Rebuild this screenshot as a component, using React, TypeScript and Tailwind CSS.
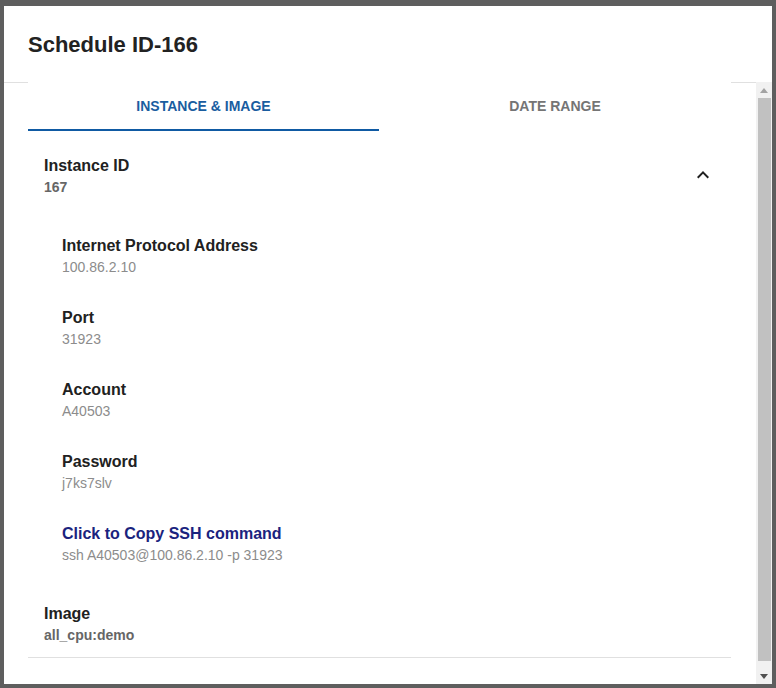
import React from 'react';

const details = [
  { label: 'Internet Protocol Address', value: '100.86.2.10' },
  { label: 'Port', value: '31923' },
  { label: 'Account', value: 'A40503' },
  { label: 'Password', value: 'j7ks7slv' },
];

function ChevronUp() {
  return (
    <svg width="24" height="24" viewBox="0 0 24 24" className="block">
      <path d="M7.41 15.41 12 10.83l4.59 4.58L18 14l-6-6-6 6z" fill="#1f1f1f" />
    </svg>
  );
}

function Scrollbar() {
  return (
    <div className="flex w-[16px] shrink-0 flex-col bg-[#f1f1f1]">
      {/* up arrow */}
      <div className="flex h-[16px] items-center justify-center">
        <svg width="8" height="5" viewBox="0 0 8 5">
          <path d="M0 5 4 0l4 5z" fill="#a3a3a3" />
        </svg>
      </div>
      <div className="flex-1 px-[1px] pb-[7px]">
        <div className="mx-auto h-full w-[13px] bg-[#c1c1c1]" />
      </div>
      {/* down arrow */}
      <div className="flex h-[16px] items-center justify-center">
        <svg width="8" height="5" viewBox="0 0 8 5">
          <path d="M0 0h8L4 5z" fill="#505050" />
        </svg>
      </div>
    </div>
  );
}

export default function App() {
  return (
    <div
      className="h-[688px] w-[776px] overflow-hidden bg-[#5e5e5e] pl-[4px] pt-[6px]"
      style={{ fontFamily: '"Liberation Sans", Arial, sans-serif' }}
    >
      <div className="flex h-[678px] w-[768px] flex-col bg-white">
        {/* Header */}
        <div className="flex h-[76px] shrink-0 items-center pl-[24px] pt-[2px]">
          <h2 className="text-[22px] font-bold leading-none text-[#222222]">Schedule ID-166</h2>
        </div>

        {/* Body */}
        <div className="flex min-h-0 flex-1">
          <div className="flex-1 border-t border-[#e0e0e0] pl-[24px] pr-[25px]">
            <div className="relative -mt-px bg-white pt-px">
              {/* Tabs */}
              <div className="flex h-[48px]">
                <div className="flex w-[351px] flex-col">
                  <div className="flex flex-1 items-center justify-center text-[14px] font-bold text-[#1a5d9f]">
                    INSTANCE &amp; IMAGE
                  </div>
                  <div className="h-[2px] bg-[#0f5aa3]" />
                </div>
                <div className="flex flex-1 items-center justify-center pb-[2px] text-[14px] font-bold text-[#757575]">
                  DATE RANGE
                </div>
              </div>

              {/* Instance accordion */}
              <div className="flex items-start pl-[16px] pr-[16px] pt-[25px]">
                <div className="flex-1">
                  <div className="text-[16px] font-bold leading-[20px] text-[#212121]">Instance ID</div>
                  <div className="mt-[3px] text-[14px] font-bold leading-[16px] text-[#666666]">167</div>
                </div>
                <div className="mt-[7px]">
                  <ChevronUp />
                </div>
              </div>

              <div className="pl-[34px] pt-[41px]">
                {details.map((d) => (
                  <div key={d.label} className="mb-[32px]">
                    <div className="text-[16px] font-bold leading-[20px] text-[#212121]">{d.label}</div>
                    <div className="mt-[2px] text-[14px] leading-[18px] text-[#8c8c8c]">{d.value}</div>
                  </div>
                ))}
                <div>
                  <div className="cursor-pointer text-[16px] font-bold leading-[20px] text-[#1a237e]">
                    Click to Copy SSH command
                  </div>
                  <div className="mt-[2px] text-[14px] leading-[18px] text-[#8c8c8c]">
                    ssh A40503@100.86.2.10 -p 31923
                  </div>
                </div>
              </div>

              {/* Image */}
              <div className="border-b border-[#e0e0e0] pb-[14px] pl-[16px] pt-[40px]">
                <div className="text-[16px] font-bold leading-[20px] text-[#212121]">Image</div>
                <div className="mt-[3px] text-[14px] font-bold leading-[16px] text-[#666666]">all_cpu:demo</div>
              </div>
            </div>
          </div>
          <Scrollbar />
        </div>
      </div>
    </div>
  );
}
